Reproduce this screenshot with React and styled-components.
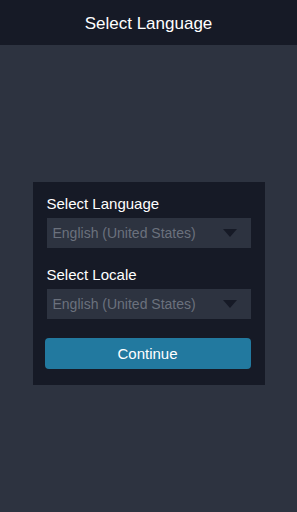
import React from 'react';
import styled, { createGlobalStyle } from 'styled-components';

const GlobalStyle = createGlobalStyle`
  html, body {
    margin: 0;
    padding: 0;
    background: #2d3340;
    font-family: "Liberation Sans", Arial, sans-serif;
  }
`;

const Page = styled.div`
  display: flex;
  flex-direction: column;
  width: 297px;
  height: 512px;
  background: #2d3340;
`;

const Header = styled.header`
  height: 45px;
  box-sizing: border-box;
  padding-top: 3px;
  flex-shrink: 0;
  display: flex;
  align-items: center;
  justify-content: center;
  background: #161a26;
  color: #ffffff;
  font-size: 17px;
`;

const Main = styled.main`
  flex: 1;
  display: flex;
  align-items: center;
  justify-content: center;
  padding-top: 10px;
`;

const Card = styled.div`
  width: 232px;
  height: 203px;
  box-sizing: border-box;
  padding: 13px 14px 0 14px;
  background: #161a26;
  display: flex;
  flex-direction: column;
`;

const Label = styled.div`
  color: #ffffff;
  font-size: 15px;
  line-height: 18px;
  margin-bottom: 5px;
  margin-top: ${props => props.first ? '0' : '18px'};
`;

const Select = styled.div`
  height: 30px;
  display: flex;
  align-items: center;
  justify-content: space-between;
  padding: 0 14px 0 6px;
  background: #2d3340;
  color: #6b717d;
  font-size: 14px;
`;

const Arrow = styled.span`
  width: 0;
  height: 0;
  border-left: 7px solid transparent;
  border-right: 7px solid transparent;
  border-top: 8px solid #161a26;
`;

const Button = styled.button`
  margin: 19px 0 0 -2px;
  height: 31px;
  width: 206px;
  border: none;
  border-radius: 4px;
  background: #22799f;
  color: #ffffff;
  font-family: "Liberation Sans", Arial, sans-serif;
  font-size: 15px;
  cursor: pointer;
`;

function Field({ label, value, first }) {
  return (
    <>
      <Label first={first}>{label}</Label>
      <Select>
        <span>{value}</span>
        <Arrow />
      </Select>
    </>
  );
}

export default function App() {
  return (
    <Page>
      <GlobalStyle />
      <Header>Select Language</Header>
      <Main>
        <Card>
          <Field first label="Select Language" value="English (United States)" />
          <Field label="Select Locale" value="English (United States)" />
          <Button>Continue</Button>
        </Card>
      </Main>
    </Page>
  );
}
